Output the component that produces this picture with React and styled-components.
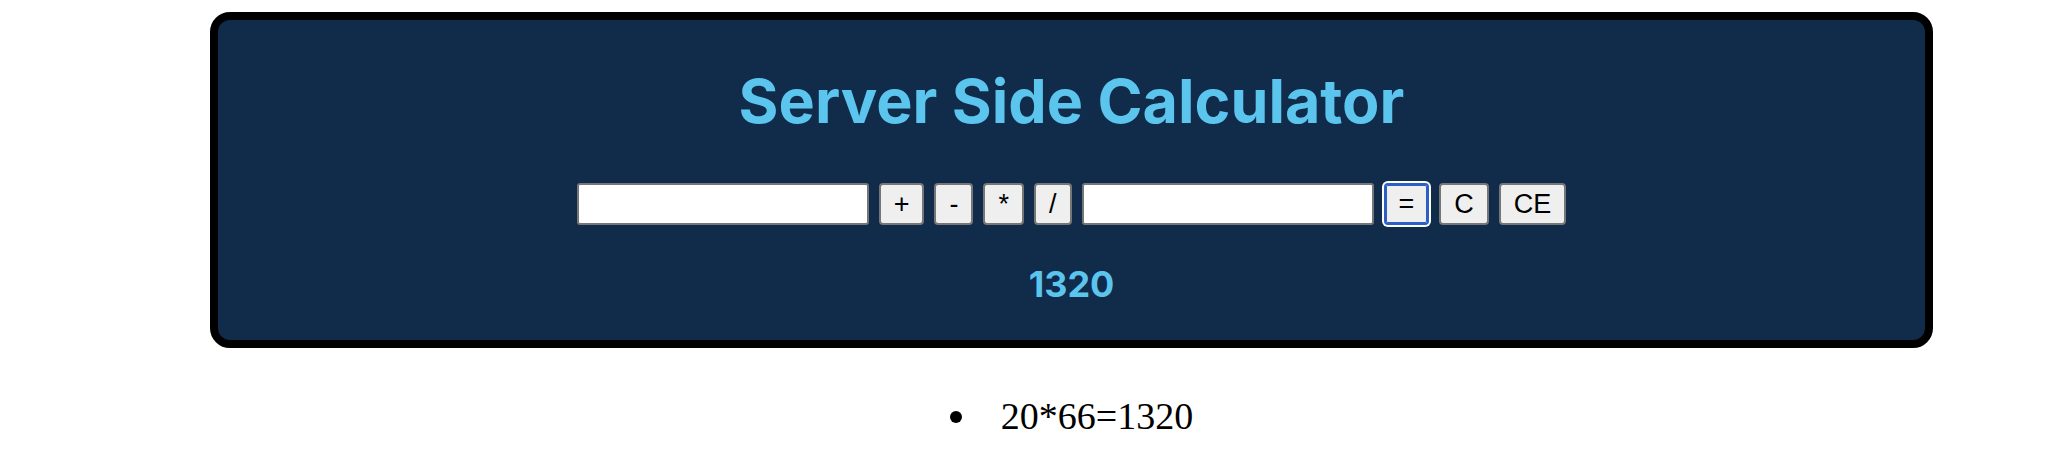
import React from "react";
import styled, { createGlobalStyle } from "styled-components";

const GlobalStyle = createGlobalStyle`
  html, body {
    margin: 0;
    padding: 0;
    background: #ffffff;
  }
`;

const Page = styled.div`
  padding: 12px 0 0 210px;
`;

const Card = styled.section`
  box-sizing: border-box;
  width: 1723px;
  border: 8px solid #000;
  border-radius: 20px;
  background: #112b4b;
  padding: 44px 0 34px;
  display: flex;
  flex-direction: column;
  align-items: center;
`;

const Title = styled.h1`
  margin: 0;
  font-family: Inter, "Noto Sans", sans-serif;
  font-weight: 700;
  font-size: 61px;
  line-height: 74px;
  color: #5bc5ee;
`;

const Row = styled.div`
  margin-top: 45px;
  display: flex;
  align-items: center;
  gap: 10px;
  height: 42px;
`;

const Field = styled.input`
  box-sizing: border-box;
  width: 292px;
  height: 42px;
  border: 2px solid #767676;
  border-radius: 3px;
  background: #fff;
  padding: 0 6px;
  font-family: "Liberation Sans", Arial, sans-serif;
  font-size: 24px;
  outline: none;
`;

const Key = styled.button`
  box-sizing: border-box;
  height: 42px;
  padding: 0 13px;
  border: 2px solid ${(p) => (p.$focused ? "#2b5fc6" : "#767676")};
  border-radius: 4px;
  background: #efefef;
  color: #000;
  font-family: "Liberation Sans", Arial, sans-serif;
  font-size: 27px;
  line-height: 1;
  cursor: pointer;
  box-shadow: ${(p) =>
    p.$focused ? "0 0 0 2px #ffffff, inset 0 0 0 1px #2b5fc6" : "none"};
`;

const Result = styled.div`
  margin-top: 38px;
  font-family: Inter, "Noto Sans", sans-serif;
  font-weight: 700;
  font-size: 36px;
  line-height: 43px;
  color: #5bc5ee;
`;

const History = styled.ul`
  width: 1723px;
  margin: 46px 0 0;
  padding: 0;
  list-style: none;
  text-align: center;
`;

const Entry = styled.li`
  font-family: "Liberation Serif", "Times New Roman", serif;
  font-size: 38px;
  line-height: 44px;
  color: #000;

  &::before {
    content: "";
    display: inline-block;
    width: 12px;
    height: 12px;
    border-radius: 50%;
    background: #000;
    margin-right: 39px;
    vertical-align: 6px;
  }
`;

export default function App() {
  const ops = ["+", "-", "*", "/"];
  return (
    <>
      <GlobalStyle />
      <Page>
        <Card>
          <Title>Server Side Calculator</Title>
          <Row>
            <Field type="text" />
            {ops.map((o) => (
              <Key key={o}>{o}</Key>
            ))}
            <Field type="text" />
            <Key $focused>=</Key>
            <Key>C</Key>
            <Key>CE</Key>
          </Row>
          <Result>1320</Result>
        </Card>
        <History>
          <Entry>20*66=1320</Entry>
        </History>
      </Page>
    </>
  );
}
